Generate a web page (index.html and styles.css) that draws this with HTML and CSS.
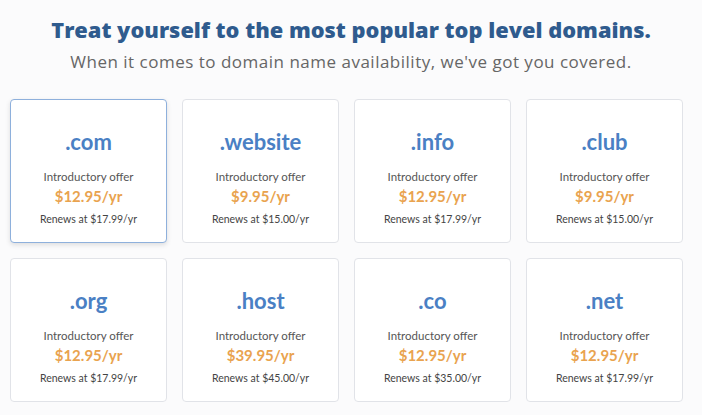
FILE: index.html
```html
<!DOCTYPE html>
<html>
<head>
<meta charset="utf-8">
<link rel="stylesheet" href="styles.css">
</head>
<body>
<header class="intro">
  <h1 class="title">Treat yourself to the most popular top level domains.</h1>
  <p class="subtitle">When it comes to domain name availability, we've got you covered.</p>
</header>
<section class="grid">
  <div class="card card-active">
    <div class="tld">.com</div>
    <div class="offer">Introductory offer</div>
    <div class="price">$12.95/yr</div>
    <div class="renew">Renews at $17.99/yr</div>
  </div>
  <div class="card">
    <div class="tld">.website</div>
    <div class="offer">Introductory offer</div>
    <div class="price">$9.95/yr</div>
    <div class="renew">Renews at $15.00/yr</div>
  </div>
  <div class="card">
    <div class="tld">.info</div>
    <div class="offer">Introductory offer</div>
    <div class="price">$12.95/yr</div>
    <div class="renew">Renews at $17.99/yr</div>
  </div>
  <div class="card">
    <div class="tld">.club</div>
    <div class="offer">Introductory offer</div>
    <div class="price">$9.95/yr</div>
    <div class="renew">Renews at $15.00/yr</div>
  </div>
  <div class="card">
    <div class="tld">.org</div>
    <div class="offer">Introductory offer</div>
    <div class="price">$12.95/yr</div>
    <div class="renew">Renews at $17.99/yr</div>
  </div>
  <div class="card">
    <div class="tld">.host</div>
    <div class="offer">Introductory offer</div>
    <div class="price">$39.95/yr</div>
    <div class="renew">Renews at $45.00/yr</div>
  </div>
  <div class="card">
    <div class="tld">.co</div>
    <div class="offer">Introductory offer</div>
    <div class="price">$12.95/yr</div>
    <div class="renew">Renews at $35.00/yr</div>
  </div>
  <div class="card">
    <div class="tld">.net</div>
    <div class="offer">Introductory offer</div>
    <div class="price">$12.95/yr</div>
    <div class="renew">Renews at $17.99/yr</div>
  </div>
</section>
</body>
</html>
```
FILE: styles.css
```css
* { box-sizing: border-box; }
html, body {
  margin: 0;
  padding: 0;
  background: #fbfbfc;
  font-family: "Open Sans", Lato, sans-serif;
}
.intro {
  text-align: center;
  padding-top: 16px;
}
.title {
  margin: 0;
  font-size: 21.8px;
  line-height: 28px;
  font-weight: 800;
  color: #2f5b8e;
}
.subtitle {
  margin: 7px 0 0;
  font-size: 17px;
  line-height: 22px;
  color: #666;
  letter-spacing: 0.5px;
}
.grid {
  display: grid;
  grid-template-columns: repeat(4, 157px);
  column-gap: 15px;
  row-gap: 15px;
  padding: 26px 0 0 10px;
}
.card {
  background: #fff;
  border: 1px solid #e1e3e8;
  border-radius: 4px;
  height: 144px;
  text-align: center;
  padding-top: 29px;
  font-family: Lato, "Open Sans", sans-serif;
}
.card-active {
  border-color: #8eb0dc;
  box-shadow: 0 2px 5px rgba(0, 0, 0, 0.12);
}
.tld {
  font-size: 22px;
  line-height: 26px;
  font-weight: 700;
  color: #4a80c4;
}
.offer {
  margin-top: 14px;
  font-size: 11.5px;
  line-height: 16px;
  color: #555;
}
.price {
  margin-top: 1px;
  font-size: 15px;
  line-height: 20px;
  font-weight: 700;
  color: #e9a34f;
}
.renew {
  margin-top: 5px;
  font-size: 10.5px;
  line-height: 16px;
  color: #444;
}
```
